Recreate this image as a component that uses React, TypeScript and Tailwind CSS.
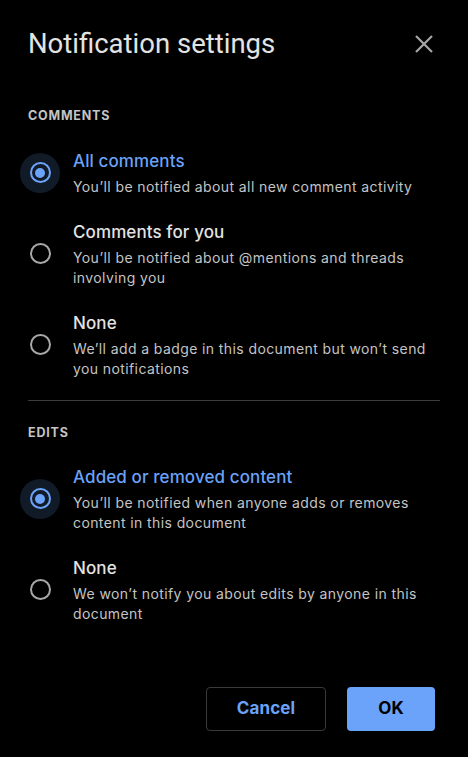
import React from "react";

type Opt = { title: string; desc: string; checked?: boolean };

function Radio({ checked }: { checked?: boolean }) {
  return (
    <div className="relative flex h-[24px] w-[24px] shrink-0 items-center justify-center">
      {checked && (
        <div className="absolute left-1/2 top-1/2 h-[40px] w-[40px] -translate-x-1/2 -translate-y-1/2 rounded-full bg-[#111a27]" />
      )}
      <div
        className={
          checked
            ? "relative flex h-[21px] w-[21px] items-center justify-center rounded-full border-2 border-[#6ba2fa]"
            : "relative flex h-[21px] w-[21px] items-center justify-center rounded-full border-2 border-[#a8a8a8]"
        }
      >
        {checked && <div className="h-[10px] w-[10px] rounded-full bg-[#6ba2fa]" />}
      </div>
    </div>
  );
}

function Row({ title, desc, checked }: Opt) {
  return (
    <div className="flex items-center gap-[21px] pb-[8px] pt-[13px]">
      <Radio checked={checked} />
      <div className="flex flex-col">
        <div
          className={
            checked
              ? "text-[17px] font-medium leading-[26px] tracking-[0.1px] text-[#6ba2fa]"
              : "text-[17px] font-medium leading-[26px] tracking-[0.1px] text-[#e3e3e3]"
          }
        >
          {title}
        </div>
        <div className="mt-[3px] text-[14px] leading-[20.5px] tracking-[0.4px] text-[#c4c4c4]">{desc}</div>
      </div>
    </div>
  );
}

export default function App() {
  return (
    <div
      className="flex h-[757px] w-[468px] flex-col bg-black px-[28px] pb-[26px] pt-[26px]"
      style={{ fontFamily: "Inter, 'Liberation Sans', sans-serif" }}
    >
      <div className="flex items-center justify-between">
        <h1
          className="text-[27.5px] font-normal leading-[36px] text-[#e3e3e3]"
          style={{ fontFamily: "Roboto, 'Liberation Sans', sans-serif" }}
        >
          Notification settings
        </h1>
        <button className="mr-[6px] flex h-[20px] w-[20px] items-center justify-center">
          <svg width="18" height="18" viewBox="0 0 18 18">
            <path d="M1 1 L17 17 M17 1 L1 17" stroke="#a6a6a6" strokeWidth="2.2" strokeLinecap="butt" />
          </svg>
        </button>
      </div>

      <div className="mt-[45px] text-[12.5px] font-bold leading-[18px] tracking-[0.8px] text-[#c4c4c4]">COMMENTS</div>
      <div className="mt-[10px] flex flex-col">
        <Row checked title="All comments" desc="You’ll be notified about all new comment activity" />
        <Row title="Comments for you" desc="You’ll be notified about @mentions and threads involving you" />
        <Row title="None" desc="We’ll add a badge in this document but won’t send you notifications" />
      </div>

      <div className="mt-[12px] h-px w-full bg-[#3c3c3c]" />

      <div className="mt-[23px] text-[12.5px] font-bold leading-[18px] tracking-[0.8px] text-[#c4c4c4]">EDITS</div>
      <div className="mt-[9px] flex flex-col">
        <Row checked title="Added or removed content" desc="You’ll be notified when anyone adds or removes content in this document" />
        <Row title="None" desc="We won’t notify you about edits by anyone in this document" />
      </div>

      <div className="mt-auto flex justify-end gap-[21px] pr-[5px]">
        <button className="h-[44px] w-[120px] rounded-[4px] border border-[#3a3a3a] text-[17px] font-bold tracking-[0.1px] text-[#6ba2fa]">
          Cancel
        </button>
        <button className="h-[44px] w-[88px] rounded-[4px] bg-[#6ba2fa] text-[17px] font-bold text-black">
          OK
        </button>
      </div>
    </div>
  );
}
